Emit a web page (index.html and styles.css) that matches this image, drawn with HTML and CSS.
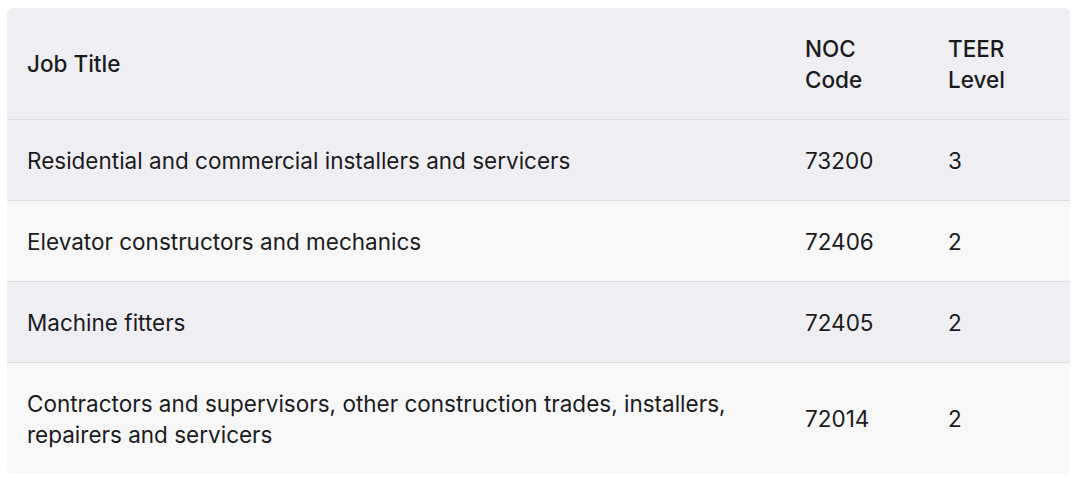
FILE: index.html
```html
<!DOCTYPE html>
<html lang="en">
<head>
<meta charset="utf-8">
<title>NOC Table</title>
<link rel="stylesheet" href="styles.css">
</head>
<body>
<div class="table-wrap">
  <table class="jobs">
    <colgroup>
      <col class="col-title">
      <col class="col-noc">
      <col class="col-teer">
    </colgroup>
    <thead>
      <tr>
        <th>Job Title</th>
        <th>NOC<br>Code</th>
        <th>TEER<br>Level</th>
      </tr>
    </thead>
    <tbody>
      <tr class="alt">
        <td>Residential and commercial installers and servicers</td>
        <td>73200</td>
        <td>3</td>
      </tr>
      <tr>
        <td>Elevator constructors and mechanics</td>
        <td>72406</td>
        <td>2</td>
      </tr>
      <tr class="alt">
        <td>Machine fitters</td>
        <td>72405</td>
        <td>2</td>
      </tr>
      <tr>
        <td>Contractors and supervisors, other construction trades, installers,<br>repairers and servicers</td>
        <td>72014</td>
        <td>2</td>
      </tr>
    </tbody>
  </table>
</div>
</body>
</html>
```

FILE: styles.css
```css
html, body {
  margin: 0;
  padding: 0;
  background: #ffffff;
}

body {
  padding: 8px 0 0 7px;
  font-family: Inter, "Noto Sans", "Liberation Sans", sans-serif;
  color: #1b1b1d;
}

.table-wrap {
  width: 1063px;
  border-radius: 6px;
  overflow: hidden;
  background: #f7f7f8;
}

.jobs {
  width: 100%;
  border-collapse: collapse;
  table-layout: fixed;
  font-size: 22.5px;
  line-height: 31px;
}

.col-title { width: 778px; }
.col-noc { width: 143px; }
.col-teer { width: 142px; }

.jobs th,
.jobs td {
  text-align: left;
  vertical-align: middle;
  padding: 24.5px 20px 24.5px 20px;
}

.jobs th {
  font-weight: 500;
  background: #efeff3;
}

.jobs thead tr,
.jobs tbody tr {
  border-bottom: 1px solid #dedee2;
}

.jobs tbody tr:last-child {
  border-bottom: none;
}

.jobs td {
  font-weight: 400;
}

.jobs tr.alt td {
  background: #efeff3;
}
```
